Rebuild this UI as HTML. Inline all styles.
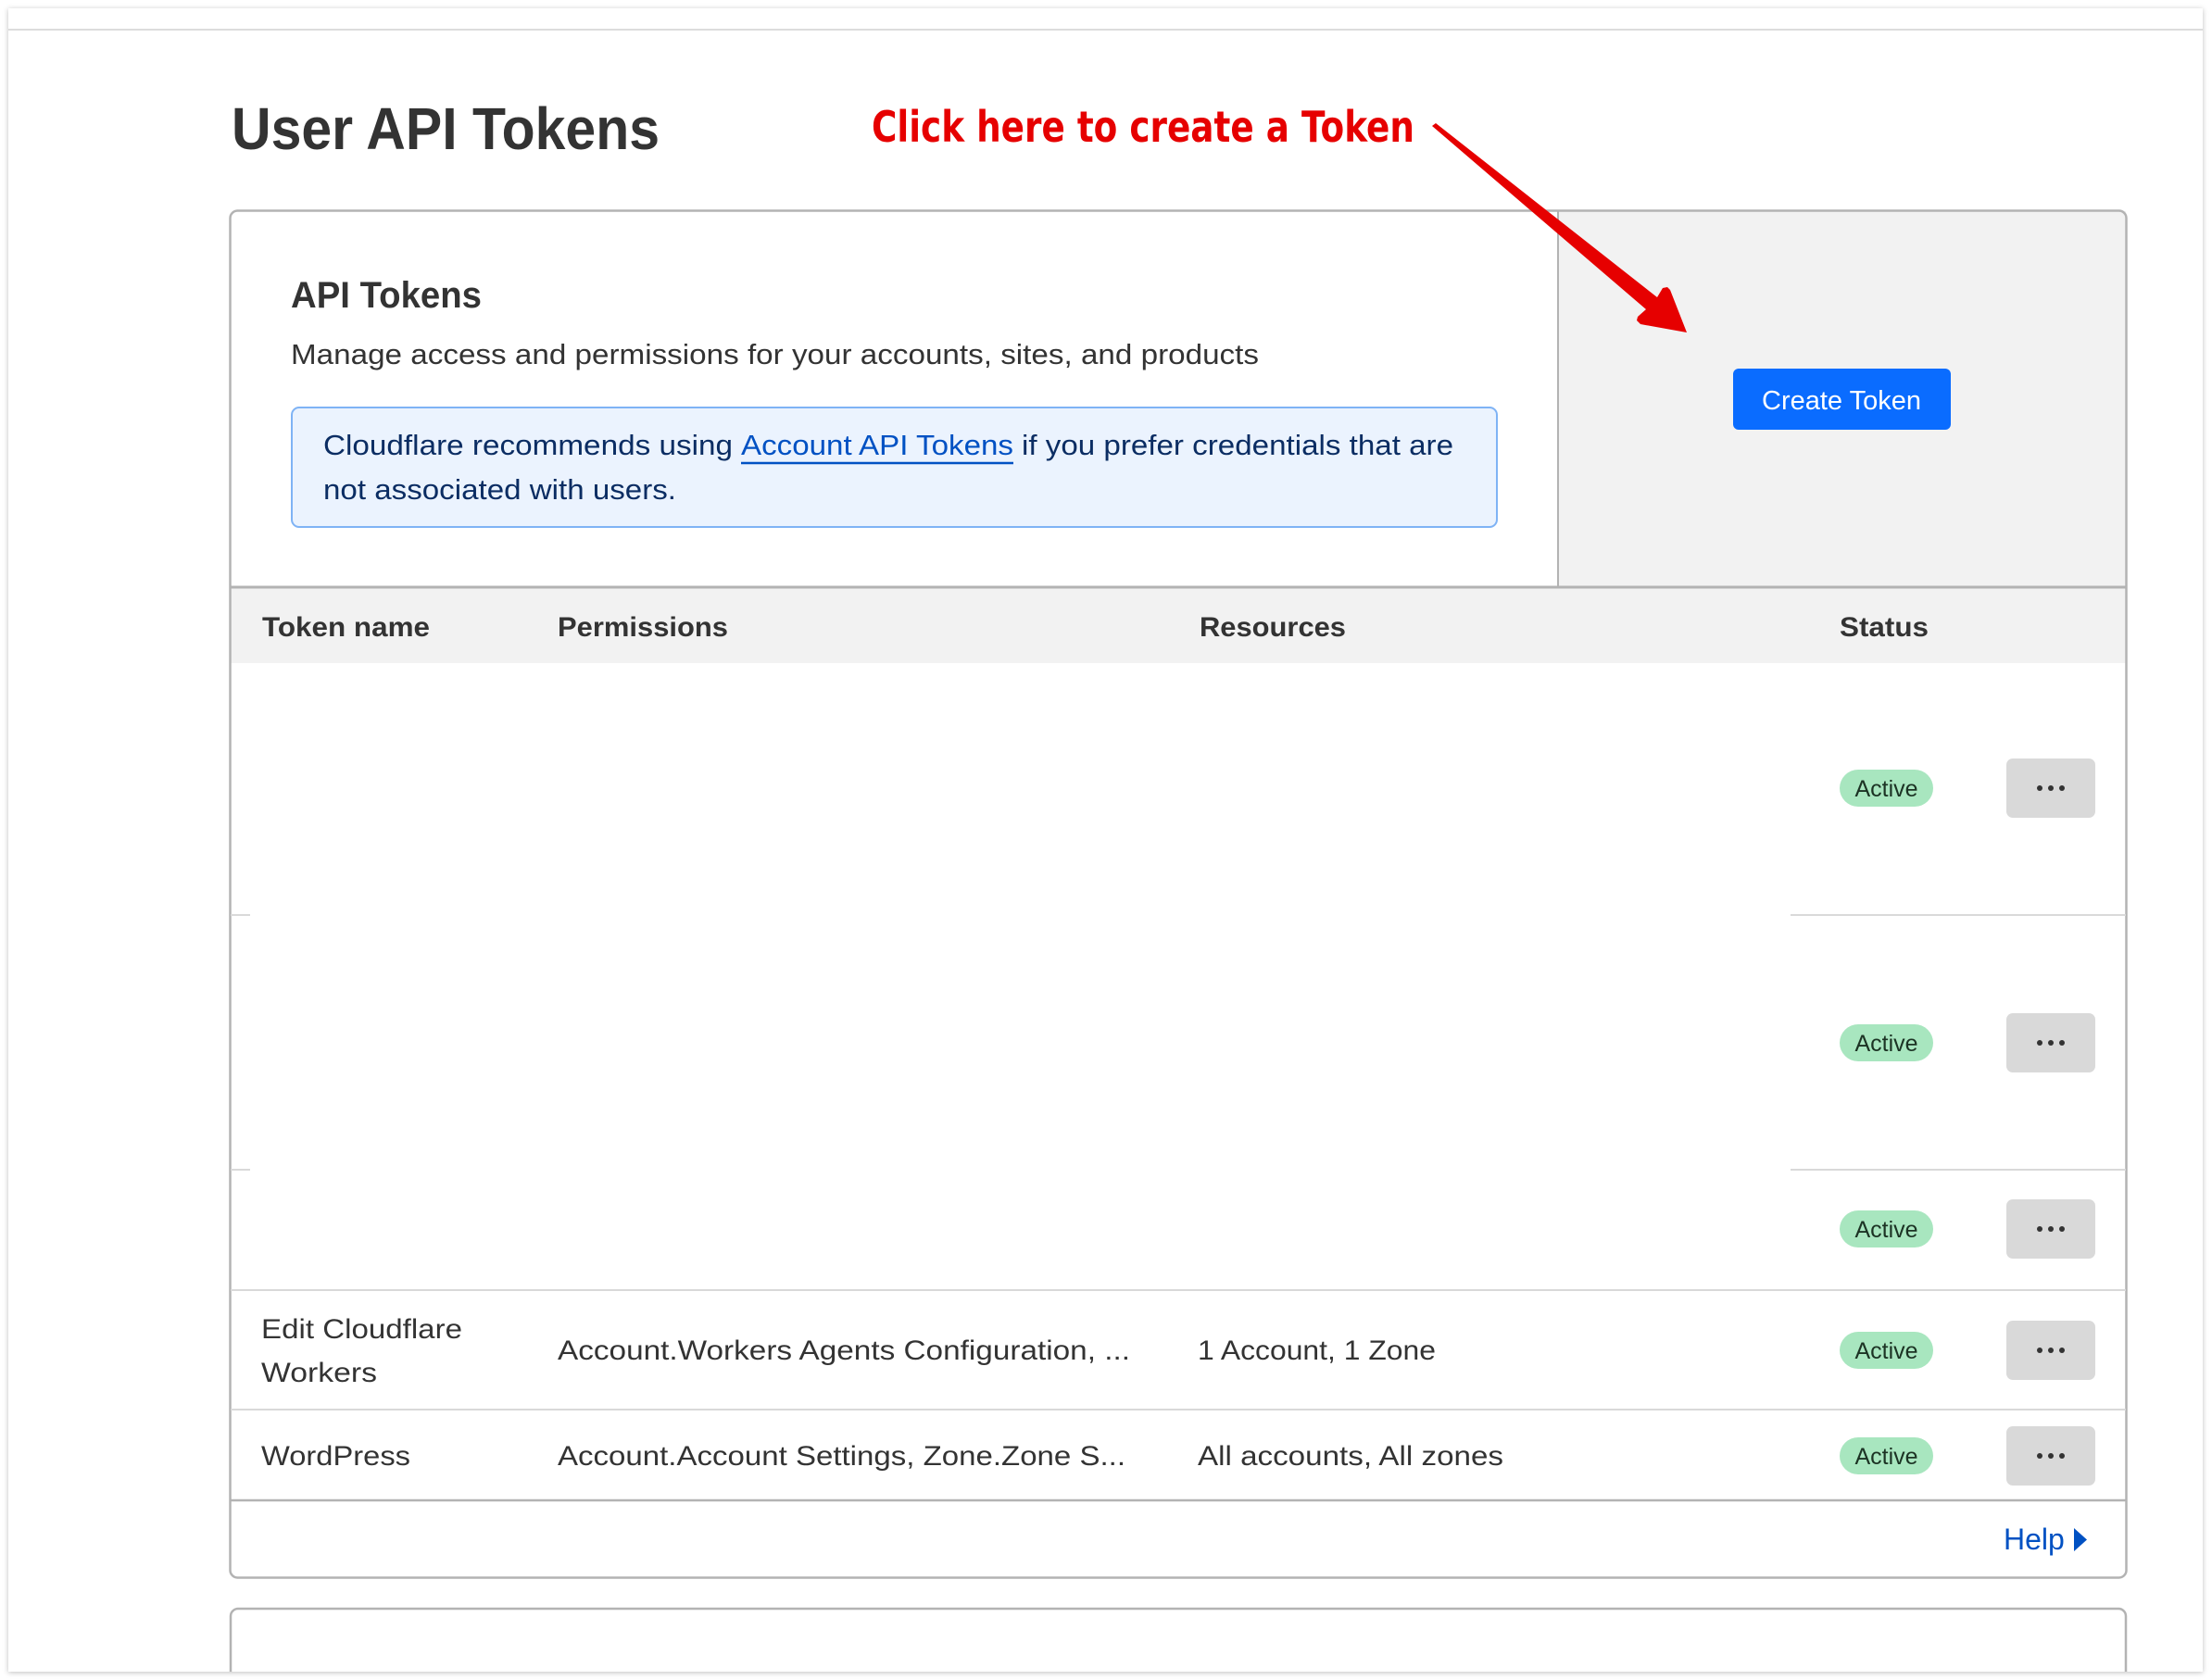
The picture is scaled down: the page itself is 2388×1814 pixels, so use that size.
<!DOCTYPE html>
<html><head><meta charset="utf-8"><style>
html,body{margin:0;padding:0;background:#fff;}
svg{display:block;}
text{font-family:"Liberation Sans",Arial,sans-serif;}
</style></head><body>
<svg width="2388" height="1814" viewBox="0 0 2388 1814" xmlns="http://www.w3.org/2000/svg">
<defs>
<filter id="sh" x="-2%" y="-2%" width="104%" height="104%"><feDropShadow dx="0" dy="1" stdDeviation="3" flood-color="#000" flood-opacity="0.25"/></filter>
<clipPath id="fc"><rect x="9" y="9" width="2369" height="1796"/></clipPath>
</defs>
<rect width="2388" height="1814" fill="#fff"/>
<rect x="9" y="9" width="2369" height="1796" fill="#fff" filter="url(#sh)"/>
<g clip-path="url(#fc)">
<line x1="9" y1="32" x2="2378" y2="32" stroke="#dcdcdc" stroke-width="2"/>

<text x="250" y="161" font-size="64" font-weight="bold" fill="#333" textLength="462" lengthAdjust="spacingAndGlyphs">User API Tokens</text>
<text x="941" y="153" font-size="46" font-weight="bold" fill="#e60000" textLength="586" lengthAdjust="spacingAndGlyphs" style="font-family:'DejaVu Sans','Liberation Sans',sans-serif">Click here to create a Token</text>

<rect x="1682" y="228" width="613" height="406" fill="#f2f2f2"/>
<rect x="249" y="635" width="2046" height="81" fill="#f2f2f2"/>
<rect x="248.5" y="227.5" width="2047" height="1476" rx="8" fill="none" stroke="#b3b3b3" stroke-width="2.5"/>
<line x1="1682" y1="228" x2="1682" y2="634" stroke="#b3b3b3" stroke-width="2"/>
<line x1="249" y1="634" x2="2295" y2="634" stroke="#b3b3b3" stroke-width="3"/>

<text x="314" y="332" font-size="40" font-weight="bold" fill="#333" textLength="206" lengthAdjust="spacingAndGlyphs">API Tokens</text>
<text x="314" y="393" font-size="31" fill="#333" textLength="1045" lengthAdjust="spacingAndGlyphs">Manage access and permissions for your accounts, sites, and products</text>

<rect x="315" y="440" width="1301" height="129" rx="8" fill="#ebf3fe" stroke="#7fb3f5" stroke-width="2"/>
<text x="349" y="491" font-size="31" fill="#0b2d63" textLength="442" lengthAdjust="spacingAndGlyphs">Cloudflare recommends using</text>
<text x="800" y="491" font-size="31" fill="#0051c3" textLength="294" lengthAdjust="spacingAndGlyphs">Account API Tokens</text>
<line x1="800" y1="500" x2="1094" y2="500" stroke="#0051c3" stroke-width="2.5"/>
<text x="1103" y="491" font-size="31" fill="#0b2d63" textLength="466" lengthAdjust="spacingAndGlyphs">if you prefer credentials that are</text>
<text x="349" y="539" font-size="31" fill="#0b2d63" textLength="381" lengthAdjust="spacingAndGlyphs">not associated with users.</text>

<rect x="1871" y="398" width="235" height="66" rx="6" fill="#0a6cff"/>
<text x="1988" y="442" font-size="29" fill="#fff" text-anchor="middle">Create Token</text>

<g font-size="30" font-weight="bold" fill="#333">
<text x="283" y="687" textLength="181" lengthAdjust="spacingAndGlyphs">Token name</text>
<text x="602" y="687" textLength="184" lengthAdjust="spacingAndGlyphs">Permissions</text>
<text x="1295" y="687" textLength="158" lengthAdjust="spacingAndGlyphs">Resources</text>
<text x="1986" y="687" textLength="96" lengthAdjust="spacingAndGlyphs">Status</text>
</g>

<g stroke="#d9d9d9" stroke-width="2">
<line x1="249" y1="988" x2="270" y2="988"/><line x1="1933" y1="988" x2="2295" y2="988"/>
<line x1="249" y1="1263" x2="270" y2="1263"/><line x1="1933" y1="1263" x2="2295" y2="1263"/>
<line x1="249" y1="1393" x2="2295" y2="1393"/>
<line x1="249" y1="1522" x2="2295" y2="1522"/>
</g>
<line x1="249" y1="1620" x2="2295" y2="1620" stroke="#b3b3b3" stroke-width="2.5"/>

<g font-size="30" fill="#333">
<text x="282" y="1445" textLength="217" lengthAdjust="spacingAndGlyphs">Edit Cloudflare</text>
<text x="282" y="1492" textLength="125" lengthAdjust="spacingAndGlyphs">Workers</text>
<text x="602" y="1468" textLength="618" lengthAdjust="spacingAndGlyphs">Account.Workers Agents Configuration, ...</text>
<text x="1293" y="1468" textLength="257" lengthAdjust="spacingAndGlyphs">1 Account, 1 Zone</text>
<text x="282" y="1582" textLength="161" lengthAdjust="spacingAndGlyphs">WordPress</text>
<text x="602" y="1582" textLength="613" lengthAdjust="spacingAndGlyphs">Account.Account Settings, Zone.Zone S...</text>
<text x="1293" y="1582" textLength="330" lengthAdjust="spacingAndGlyphs">All accounts, All zones</text>
</g>

<g id="r1">
<rect x="1986" y="831" width="101" height="40" rx="20" fill="#a8e6bf"/>
<text x="2036.5" y="860" font-size="25" fill="#1c3324" text-anchor="middle">Active</text>
<rect x="2166" y="819" width="96" height="64" rx="7" fill="#d9d9d9"/>
<circle cx="2202" cy="851" r="3" fill="#333"/><circle cx="2214" cy="851" r="3" fill="#333"/><circle cx="2226" cy="851" r="3" fill="#333"/>
</g>
<use href="#r1" y="275"/>
<use href="#r1" y="476"/>
<use href="#r1" y="607"/>
<use href="#r1" y="721"/>

<text x="2163" y="1673" font-size="32" fill="#0051c3">Help</text>
<polygon points="2239,1650 2253,1662.5 2239,1675" fill="#0051c3"/>

<path d="M249 1806 V1745 a8 8 0 0 1 8 -8 H2287 a8 8 0 0 1 8 8 V1806" fill="none" stroke="#b3b3b3" stroke-width="2.5"/>

<polygon points="1546,136 1550,133 1789,321 1795,311 1800,310 1803,313 1821,359 1771,350 1767,346 1768,342 1777,334" fill="#e60000"/>
</g>
</svg>
</body></html>
